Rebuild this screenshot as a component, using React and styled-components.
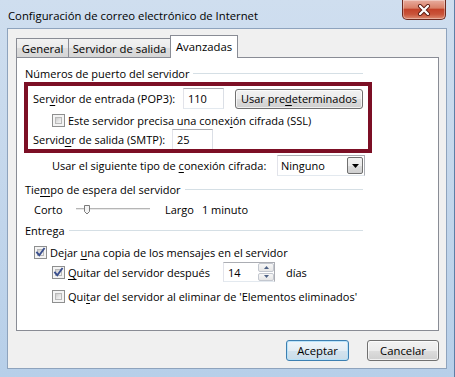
import React from "react";
import styled, { createGlobalStyle } from "styled-components";

const GlobalStyle = createGlobalStyle`
  html, body { margin: 0; padding: 0; }
  body {
    width: 455px; height: 377px; overflow: hidden;
    font-family: "Open Sans", "Noto Sans", sans-serif;
    font-size: 11.3px; color: #000;
  }
`;

const Window = styled.div`
  width: 455px; height: 377px; box-sizing: border-box;
  display: flex; flex-direction: column;
  background: linear-gradient(180deg, #cfdeef 0%, #c6d8ec 40%, #b7cfe9 100%);
  border-right: 1px solid #5d7ea6;
`;

const TitleBar = styled.div`
  height: 28px; display: flex; align-items: flex-start;
`;

const Title = styled.div`
  margin: 8px 0 0 8px; line-height: 15px; color: #000;
`;

const CloseButton = styled.div`
  margin-left: auto; margin-right: 8px;
  width: 44px; height: 20px; box-sizing: border-box;
  border: 1px solid #6d2a20; border-top: none; border-radius: 0 0 5px 5px;
  background: linear-gradient(180deg, #e8ad9f 0%, #d98068 42%, #c4432a 50%, #c9543a 75%, #dd8a70 100%);
  box-shadow: inset 0 0 0 1px rgba(255, 255, 255, 0.35);
  display: flex; align-items: center; justify-content: center;
`;

const Client = styled.div`
  flex: 1; margin: 0 7px 8px 7px;
  box-sizing: border-box; border: 1px solid #8ea3bd;
  background: #f0f0f0;
  display: flex; flex-direction: column;
  padding: 6px 7px 7px 8px;
  font-size: 11px;
`;

const TabRow = styled.div`
  height: 22px; display: flex; align-items: flex-end;
  position: relative; z-index: 1;
  font-size: 11.3px;
`;

const Tab = styled.div`
  box-sizing: border-box; width: ${(p) => p.$w}px;
  height: ${(p) => (p.$active ? 23 : 19)}px;
  margin-left: ${(p) => (p.$first ? 0 : -1)}px;
  margin-bottom: ${(p) => (p.$active ? -1 : 0)}px;
  border: 1px solid #898c95; border-bottom: none;
  background: ${(p) =>
    p.$active
      ? "#ffffff"
      : "linear-gradient(180deg, #f2f2f2 0%, #ebebeb 50%, #dddddd 51%, #d6d6d6 100%)"};
  text-align: center; line-height: 15px;
  padding-top: ${(p) => (p.$active ? 3 : 2)}px;
`;

const Panel = styled.div`
  flex: 1; box-sizing: border-box;
  border: 1px solid #898c95; background: #fff;
  display: flex; flex-direction: column; align-items: flex-start;
  padding: 8px 0 0 8px;
`;

const GroupHeader = styled.div`
  width: 338px; height: 15px; line-height: 15px;
  display: flex; align-items: center;
  margin-top: ${(p) => p.$mt || 0}px;
  &::after {
    content: ""; flex: 1; height: 1px; background: #d5dfe5; margin-left: 4px;
  }
`;

const RedBox = styled.div`
  box-sizing: border-box; width: 348px; height: 71px;
  margin: 1px 0 0 -1px;
  border: 4px solid #7c0f25;
  padding: 2px 0 0 5px;
  display: flex; flex-direction: column;
  overflow: hidden;
`;

const Row = styled.div`
  display: flex; align-items: center;
  height: ${(p) => p.$h}px;
  margin-top: ${(p) => p.$mt || 0}px;
  margin-left: ${(p) => p.$ml || 0}px;
  line-height: 15px; white-space: nowrap;
`;

const Label = styled.span`
  display: inline-block; width: ${(p) => (p.$w ? `${p.$w}px` : "auto")};
  margin-left: ${(p) => p.$ml || 0}px;
  flex-shrink: 0;
`;

const Acc = styled.span`
  text-decoration: underline; text-underline-offset: 2px;
`;

const TextBox = styled.div`
  box-sizing: border-box; width: ${(p) => p.$w}px; height: ${(p) => p.$h}px;
  border: 1px solid #abadb3; border-left-color: #e2e3ea; border-right-color: #dbdfe6; border-bottom-color: #e3e9ef;
  background: #fff; padding-left: 4px;
  display: flex; align-items: center; flex-shrink: 0;
`;

const PushButton = styled.div`
  box-sizing: border-box; width: ${(p) => p.$w}px; height: ${(p) => p.$h}px;
  margin-left: ${(p) => p.$ml || 0}px;
  border: 1px solid ${(p) => (p.$default ? "#3c7fb1" : "#707070")};
  border-radius: 3px;
  background: ${(p) =>
    p.$default
      ? "linear-gradient(180deg, #eef5fa 0%, #e3edf4 50%, #d3e3ee 51%, #c9dce9 100%)"
      : "linear-gradient(180deg, #f2f2f2 0%, #ebebeb 50%, #dddddd 51%, #cfcfcf 100%)"};
  box-shadow: inset 0 0 0 1px ${(p) => (p.$default ? "rgba(180,225,250,0.9)" : "rgba(255,255,255,0.7)")};
  display: flex; align-items: center; justify-content: center;
  flex-shrink: 0;
`;

const BoxOuter = styled.span`
  box-sizing: border-box; width: 13px; height: 13px; flex-shrink: 0;
  border: 1px solid #8e8f8f; background: #f4f4f4;
  padding: 2px; display: inline-flex; position: relative;
  margin-right: 3px;
`;

const BoxInner = styled.span`
  flex: 1;
  background: linear-gradient(135deg, #cbcbcb 0%, #e4e4e4 50%, #f6f6f6 100%);
  border: 1px solid #b9b9b9; box-sizing: border-box;
`;

const CheckMark = styled.svg`
  position: absolute; left: 0; top: 0;
`;

function CheckBox({ checked }) {
  return (
    <BoxOuter>
      <BoxInner />
      {checked && (
        <CheckMark width="11" height="11" viewBox="0 0 11 11">
          <path d="M2 5.5 L4.3 8.2 L9 1.8" fill="none" stroke="#3a4f8e" strokeWidth="1.9" strokeLinecap="square" />
        </CheckMark>
      )}
    </BoxOuter>
  );
}

const Select = styled.div`
  box-sizing: border-box; width: 88px; height: 21px;
  border: 1px solid #abadb3; border-bottom-color: #e3e9ef; border-left-color: #e2e3ea;
  background: #fff; display: flex; align-items: center; flex-shrink: 0;
`;

const SelectText = styled.span`
  flex: 1; padding-left: 3px;
`;

const DropButton = styled.div`
  box-sizing: border-box; width: 16px; height: 17px; margin-right: 1px;
  border: 1px solid #707070; border-radius: 2px;
  background: linear-gradient(180deg, #f2f2f2 0%, #ebebeb 50%, #dddddd 51%, #cfcfcf 100%);
  display: flex; align-items: center; justify-content: center;
`;

const Spinner = styled.div`
  box-sizing: border-box; width: 52px; height: 20px;
  border: 1px solid #abadb3; border-bottom-color: #e3e9ef; border-left-color: #e2e3ea;
  background: #fff; display: flex; align-items: stretch; flex-shrink: 0;
`;

const SpinText = styled.span`
  flex: 1; padding-left: 4px; display: flex; align-items: center;
`;

const SpinButtons = styled.div`
  width: 16px; display: flex; flex-direction: column; gap: 1px;
`;

const SpinHalf = styled.div`
  flex: 1; box-sizing: border-box;
  border: 1px solid #c3c7cf; border-radius: 2px;
  background: linear-gradient(180deg, #f7f7f7 0%, #e6e6e6 100%);
  display: flex; align-items: center; justify-content: center;
`;

const ButtonRow = styled.div`
  margin-top: 9px; display: flex; justify-content: flex-end; gap: 18px;
  font-size: 11.3px;
`;

function Slider() {
  return (
    <svg width="76" height="15" viewBox="0 0 76 15">
      <line x1="0" y1="6.5" x2="74" y2="6.5" stroke="#b5b5b5" strokeWidth="1" />
      <line x1="0" y1="7.5" x2="74" y2="7.5" stroke="#e8e8e8" strokeWidth="1" />
      <path d="M8.5 3.5 H13.5 V9.5 L11 12 L8.5 9.5 Z" fill="#f3f3f3" stroke="#7a7a7a" strokeWidth="1" />
    </svg>
  );
}

export default function App() {
  return (
    <>
      <GlobalStyle />
      <Window>
        <TitleBar>
          <Title>Configuración de correo electrónico de Internet</Title>
          <CloseButton>
            <svg width="16" height="12" viewBox="0 0 16 12">
              <path d="M4 2 L12 10 M12 2 L4 10" stroke="#5a1a10" strokeWidth="4" strokeLinecap="round" />
              <path d="M4 2 L12 10 M12 2 L4 10" stroke="#ffffff" strokeWidth="2.3" strokeLinecap="round" />
            </svg>
          </CloseButton>
        </TitleBar>
        <Client>
          <TabRow>
            <Tab $w={53} $first>General</Tab>
            <Tab $w={103}>Servidor de salida</Tab>
            <Tab $w={68} $active>Avanzadas</Tab>
          </TabRow>
          <Panel>
            <GroupHeader>Números de puerto del servidor</GroupHeader>
            <RedBox>
              <Row $h={21}>
                <Label $w={150}>Ser<Acc>v</Acc>idor de entrada (POP3):</Label>
                <TextBox $w={41} $h={21}>110</TextBox>
                <PushButton $w={128} $h={20} $ml={11}>Usar pre<Acc>d</Acc>eterminados</PushButton>
              </Row>
              <Row $h={15} $mt={4} $ml={19}>
                <CheckBox />
                <Label>Este servidor precisa una conex<Acc>i</Acc>ón cifrada (SSL)</Label>
              </Row>
              <Row $h={19} $mt={2}>
                <Label $w={139}>Servid<Acc>o</Acc>r de salida (SMTP):</Label>
                <TextBox $w={41} $h={21}>25</TextBox>
              </Row>
            </RedBox>
            <Row $h={21} $mt={2} $ml={27}>
              <Label $w={225}>Usar el siguiente tipo de <Acc>c</Acc>onexión cifrada:</Label>
              <Select>
                <SelectText>Ninguno</SelectText>
                <DropButton>
                  <svg width="7" height="4" viewBox="0 0 7 4">
                    <path d="M0 0 H7 L3.5 4 Z" fill="#000" />
                  </svg>
                </DropButton>
              </Select>
            </Row>
            <GroupHeader $mt={6}>Tie<Acc>m</Acc>po de espera del servidor</GroupHeader>
            <Row $h={15} $mt={5} $ml={9}>
              <Label $w={42}>Corto</Label>
              <Slider />
              <Label $ml={13}>Largo</Label>
              <Label $ml={8}>1 minuto</Label>
            </Row>
            <GroupHeader $mt={6}>Entrega</GroupHeader>
            <Row $h={15} $mt={7} $ml={9}>
              <CheckBox checked />
              <Label>Dejar <Acc>u</Acc>na copia de los mensajes en el servidor</Label>
            </Row>
            <Row $h={20} $mt={2} $ml={27}>
              <CheckBox checked />
              <Label $w={155}><Acc>Q</Acc>uitar del servidor después</Label>
              <Spinner>
                <SpinText>14</SpinText>
                <SpinButtons>
                  <SpinHalf>
                    <svg width="5" height="3" viewBox="0 0 5 3"><path d="M0 3 L2.5 0 L5 3 Z" fill="#4d6185" /></svg>
                  </SpinHalf>
                  <SpinHalf>
                    <svg width="5" height="3" viewBox="0 0 5 3"><path d="M0 0 L2.5 3 L5 0 Z" fill="#4d6185" /></svg>
                  </SpinHalf>
                </SpinButtons>
              </Spinner>
              <Label $ml={11}>días</Label>
            </Row>
            <Row $h={15} $mt={7} $ml={27}>
              <CheckBox />
              <Label>Qui<Acc>t</Acc>ar del servidor al eliminar de 'Elementos eliminados'</Label>
            </Row>
          </Panel>
          <ButtonRow>
            <PushButton $w={63} $h={21} $default>Aceptar</PushButton>
            <PushButton $w={72} $h={21}>Cancelar</PushButton>
          </ButtonRow>
        </Client>
      </Window>
    </>
  );
}
